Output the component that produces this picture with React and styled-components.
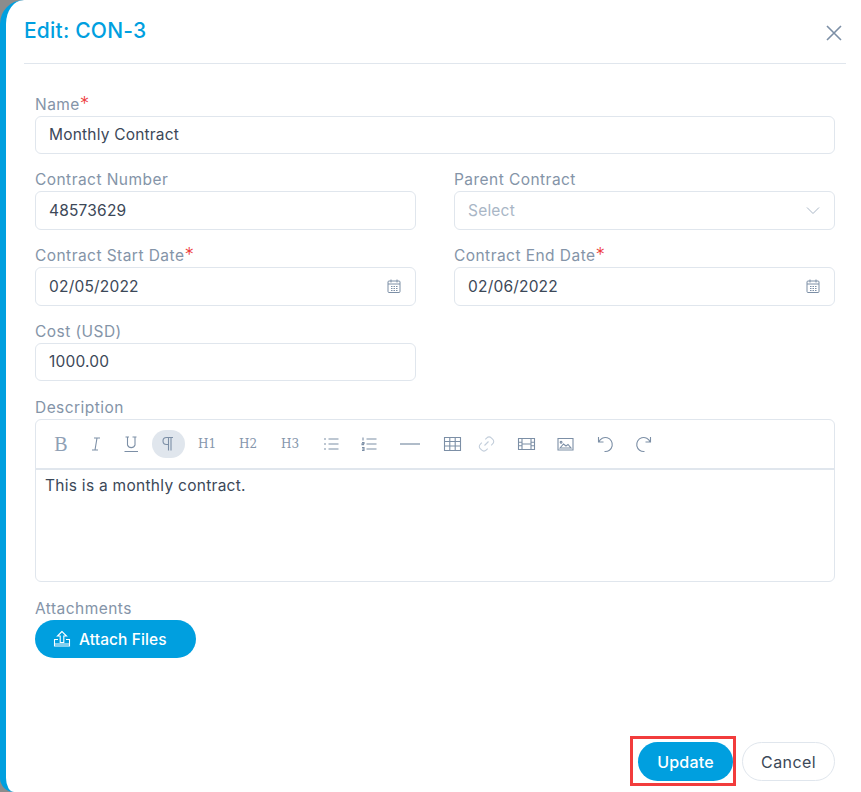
import React from "react";
import styled, { createGlobalStyle } from "styled-components";

const Global = createGlobalStyle`
  html, body {
    margin: 0;
    height: 100%;
    background: #8c8c8c;
    overflow: hidden;
    font-family: Inter, "Open Sans", sans-serif;
  }
`;

const Modal = styled.div`
  box-sizing: border-box;
  width: 861px;
  height: 792px;
  display: flex;
  flex-direction: column;
  background: #fff;
  border-left: 6px solid #009fdf;
  border-radius: 24px 0 0 14px;
  padding-right: 15px;
`;

const Header = styled.header`
  height: 63px;
  margin-left: 18px;
  display: flex;
  justify-content: space-between;
  border-bottom: 1px solid #e0e6ed;
`;

const Title = styled.h1`
  margin: 18px 0 0;
  font-size: 21px;
  line-height: 26px;
  font-weight: 500;
  letter-spacing: 0.2px;
  color: #009fdf;
`;

const Close = styled.svg`
  width: 18px;
  height: 18px;
  margin: 24px 3px 0 0;
  stroke: #7c8fa6;
  stroke-width: 1.6;
  fill: none;
`;

const Form = styled.div`
  flex: 1;
  margin: 0 11px 0 29px;
  padding-top: 30px;
  display: flex;
  flex-direction: column;
`;

const Row = styled.div`
  display: grid;
  grid-template-columns: 381px 381px;
  column-gap: 38px;
  margin-bottom: ${(p) => p.$gap || 15}px;
`;

const NameField = styled.div`
  display: flex;
  flex-direction: column;
  margin-bottom: 15px;
`;

const Field = styled.div`
  display: flex;
  flex-direction: column;
`;

const Label = styled.label`
  font-size: 15.5px;
  line-height: 21px;
  height: 22px;
  letter-spacing: 0.45px;
  color: #8494a8;
`;

const Star = styled.span`
  color: #ee3f3f;
  font-size: 19px;
  font-weight: 300;
  line-height: 0;
`;

const InputBox = styled.div`
  box-sizing: border-box;
  height: ${(p) => p.$h || 39}px;
  display: flex;
  align-items: center;
  justify-content: space-between;
  padding: 0 14px 1px 13px;
  border: 1px solid #e0e6ed;
  border-radius: 6px;
  font-size: 15.5px;
  letter-spacing: 0.2px;
  color: ${(p) => (p.$placeholder ? "#a9b6c6" : "#3c4858")};
`;

const EmptyField = styled.div``;

const FieldIcon = styled.svg`
  width: 16px;
  height: 16px;
  fill: none;
  stroke: ${(p) => p.$color || "#7c8fa6"};
  stroke-width: 1;
  margin-right: -1px;
`;

const Editor = styled.div`
  box-sizing: border-box;
  height: 163px;
  border: 1px solid #e0e6ed;
  border-radius: 6px;
  margin-bottom: 16px;
`;

const Toolbar = styled.div`
  height: 48px;
  display: flex;
  align-items: center;
  padding-left: 8px;
  border-bottom: 2px solid #e0e6ed;
`;

const ToolButton = styled.div`
  flex: none;
  width: ${(p) => p.$w}px;
  height: 28px;
  display: flex;
  align-items: center;
  justify-content: center;
  font-family: "DejaVu Serif", serif;
  font-size: 12px;
  color: #8496ab;
`;

const BoldGlyph = styled.span`
  font-family: "Liberation Serif", serif;
  font-size: 20px;
  color: #8fa0b5;
`;

const ActivePill = styled.div`
  width: 33px;
  height: 28px;
  border-radius: 14px;
  background: #e0e6ed;
  display: flex;
  align-items: center;
  justify-content: center;
`;

const ToolIcon = styled.svg`
  width: ${(p) => (p.$wide ? 20 : 19)}px;
  height: 18px;
  fill: none;
  stroke: ${(p) => (p.$muted ? "#c3cedb" : "#7c8fa6")};
  stroke-width: 1.1;
`;

const EditorText = styled.div`
  padding: 6px 9px;
  font-size: 15.5px;
  line-height: 20px;
  letter-spacing: 0.28px;
  color: #3c4858;
`;

const AttachButton = styled.button`
  width: 161px;
  height: 38px;
  border: 0;
  border-radius: 19px;
  background: #009fdf;
  color: #fff;
  display: flex;
  align-items: center;
  gap: 8px;
  padding: 0 0 0 18px;
  font: 500 15.5px Inter, sans-serif;
  letter-spacing: 0.1px;
`;

const AttachIcon = styled.svg`
  width: 18px;
  height: 18px;
  fill: none;
  stroke: #fff;
  stroke-width: 1.1;
`;

const Footer = styled.footer`
  display: flex;
  justify-content: flex-end;
  align-items: flex-start;
  gap: 6px;
  margin: 0 11px 6px 0;
`;

const Highlight = styled.div`
  border: 3px solid #f23c3c;
  padding: 3px 0 2px 5px;
  margin-top: -6px;
  display: flex;
`;

const PrimaryButton = styled.button`
  width: 95px;
  height: 39px;
  border: 0;
  border-radius: 20px;
  background: #009fdf;
  color: #fff;
  font: 500 16px Inter, sans-serif;
  letter-spacing: 0.2px;
`;

const GhostButton = styled.button`
  width: 93px;
  height: 39px;
  border: 1px solid #e0e6ed;
  border-radius: 20px;
  background: #fff;
  color: #3c4858;
  font: 400 16px Inter, sans-serif;
  letter-spacing: 0.4px;
`;

const Calendar = () => (
  <FieldIcon viewBox="0 0 16 16">
    <rect x="2" y="3" width="12" height="11.5" rx="1" />
    <path d="M2 6h12M5 1.5v3M11 1.5v3" />
    <path d="M5 8.5h1.5M7.5 8.5H9M10 8.5h1.5M5 10.5h1.5M7.5 10.5H9M10 10.5h1.5M5 12.5h1.5M7.5 12.5H9M10 12.5h1.5" strokeWidth="1.2" />
  </FieldIcon>
);

const tools = [
  { w: 34, label: <BoldGlyph>B</BoldGlyph> },
  { w: 36, icon: <path d="M7 3h6M5 15h6M10 3 8 15" /> },
  { w: 34, icon: <path d="M3.5 2h3.5M10.5 2h4M5.5 2v8a4 4 0 0 0 7.5 0V2M2.5 16.5h13.5" /> },
  { w: 40, active: true, icon: <path d="M14 2.5H7.5a3.5 3.5 0 0 0 0 7H9.5M9.5 2.5v13M12 2.5v13" /> },
  { w: 38, label: "H1" },
  { w: 44, label: "H2" },
  { w: 40, label: "H3" },
  { w: 42, icon: <path d="M6.5 4h10M6.5 9h10M6.5 14h10M2 4h2M2 9h2M2 14h2" strokeWidth="1.2" /> },
  { w: 34, icon: <path d="M6.5 4h10M6.5 9h10M6.5 14h10M3 2.5v3M2 7.5h2v1.2H2v1h2M2 12.5h2v3H2M2 14h2" /> },
  { w: 48, wide: true, icon: <path d="M0 9h20" strokeWidth="1.2" /> },
  { w: 36, icon: <path d="M1.5 2.5h16v13h-16zM1.5 6.5h16M1.5 11h16M6.8 2.5v13M12.2 2.5v13" /> },
  { w: 32, muted: true, icon: <path d="M7.5 10.5 11.5 6.5M8.3 4.4l1.6-1.6a3 3 0 0 1 4.3 0l1.6 1.6a3 3 0 0 1 0 4.3l-1.6 1.6M10.7 13.6l-1.6 1.6a3 3 0 0 1-4.3 0l-1.6-1.6a3 3 0 0 1 0-4.3l1.6-1.6" /> },
  { w: 48, icon: <path d="M1.5 3.5h16v11h-16zM5 3.5v11M14 3.5v11M1.5 7.2H5M1.5 10.8H5M14 7.2h3.5M14 10.8h3.5M5 9h9" /> },
  { w: 30, icon: <path d="M2 3.5h15v11.5H2zM4 13l3.5-4 2.5 2 2-1.5 3 3.5zM6 7.2a.9.9 0 1 0 0 .1" /> },
  { w: 48, icon: <path d="M3.5 2v5h5M3.8 7A7 7 0 1 1 9.5 16.5" /> },
  { w: 32, icon: <path d="M15.5 2v5h-5M15.2 7A7 7 0 1 0 9.5 16.5" /> },
];

const Tool = ({ t }) => {
  const svg = t.icon && (
    <ToolIcon viewBox={t.wide ? "0 0 20 18" : "0 0 19 18"} $muted={t.muted} $wide={t.wide}>
      {t.icon}
    </ToolIcon>
  );
  return (
    <ToolButton $w={t.w}>
      {t.active ? <ActivePill>{svg}</ActivePill> : svg || t.label}
    </ToolButton>
  );
};

const App = () => (
  <>
    <Global />
    <Modal>
      <Header>
        <Title>Edit: CON-3</Title>
        <Close viewBox="0 0 18 18">
          <path d="M2 2l14 14M16 2 2 16" />
        </Close>
      </Header>
      <Form>
        <NameField>
          <Label>Name<Star>*</Star></Label>
          <InputBox $h={38}>Monthly Contract</InputBox>
        </NameField>
        <Row>
          <Field>
            <Label>Contract Number</Label>
            <InputBox>48573629</InputBox>
          </Field>
          <Field>
            <Label>Parent Contract</Label>
            <InputBox $placeholder>
              Select
              <FieldIcon viewBox="0 0 16 16" $color="#a9b6c6">
                <path d="M2 5.5l6 6 6-6" />
              </FieldIcon>
            </InputBox>
          </Field>
        </Row>
        <Row>
          <Field>
            <Label>Contract Start Date<Star>*</Star></Label>
            <InputBox>02/05/2022<Calendar /></InputBox>
          </Field>
          <Field>
            <Label>Contract End Date<Star>*</Star></Label>
            <InputBox>02/06/2022<Calendar /></InputBox>
          </Field>
        </Row>
        <Row $gap={16}>
          <Field>
            <Label>Cost (USD)</Label>
            <InputBox $h={38}>1000.00</InputBox>
          </Field>
          <EmptyField />
        </Row>
        <Field>
          <Label>Description</Label>
          <Editor>
            <Toolbar>
              {tools.map((t, i) => (
                <Tool key={i} t={t} />
              ))}
            </Toolbar>
            <EditorText>This is a monthly contract.</EditorText>
          </Editor>
        </Field>
        <Field>
          <Label>Attachments</Label>
          <AttachButton>
            <AttachIcon viewBox="0 0 18 18">
              <path d="M9 1.5 4.5 6h2.7v6.5h3.6V6h2.7zM5 9.5H1.5v6.5h15V9.5H13M1.5 14h15" />
            </AttachIcon>
            Attach Files
          </AttachButton>
        </Field>
      </Form>
      <Footer>
        <Highlight>
          <PrimaryButton>Update</PrimaryButton>
        </Highlight>
        <GhostButton>Cancel</GhostButton>
      </Footer>
    </Modal>
  </>
);

export default App;
